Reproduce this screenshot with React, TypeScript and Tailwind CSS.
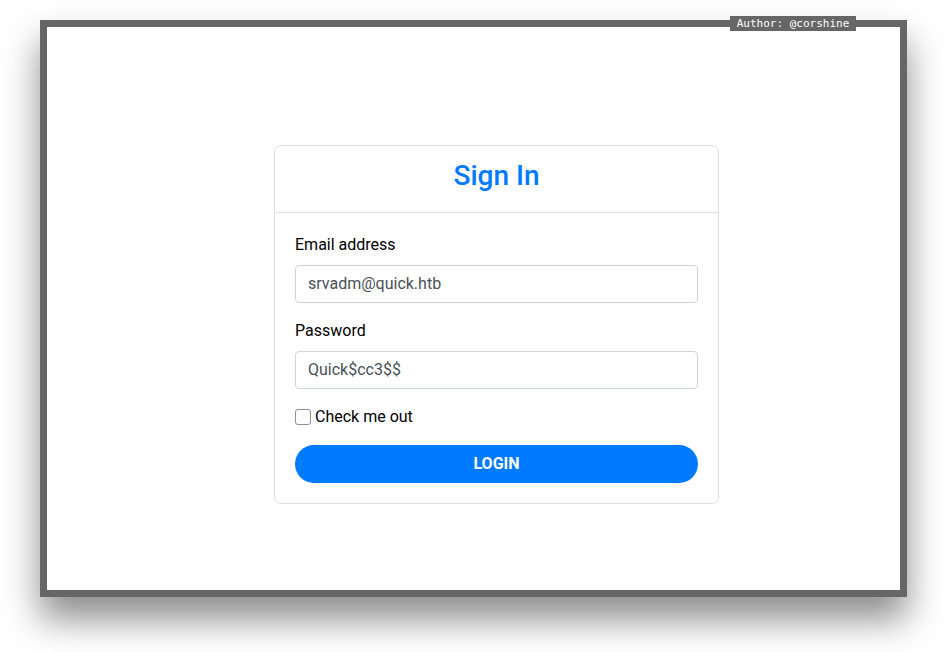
export default function App() {
  return (
    <div className="w-[947px] h-[652px] bg-white overflow-hidden font-['Roboto',sans-serif]">
      <div className="relative ml-[40px] mt-[20px] w-[867px] h-[577px] border-[7px] border-[#666666] bg-white shadow-[0_22px_34px_rgba(0,0,0,0.45)]">
        {/* Author tag */}
        <div className="absolute -top-[11px] left-[683px] h-[15px] w-[126px] bg-[#666666] text-white text-[11px] leading-[15px] text-center font-['DejaVu_Sans_Mono',monospace]">
          Author: @corshine
        </div>

        <div className="pl-[227px] pt-[118px]">
          <div className="w-[445px] rounded-[7px] border border-[#dcdfe3] bg-white">
            <div className="border-b border-[#dcdfe3] pt-[13px] pb-[19px] text-center">
              <h1 className="text-[28px] leading-[1.2] font-medium text-[#007bff]">Sign In</h1>
            </div>
            <form className="p-5" onSubmit={(e) => e.preventDefault()}>
              <label className="block text-base leading-6 text-black mb-2">Email address</label>
              <input
                type="text"
                defaultValue="srvadm@quick.htb"
                className="block w-full h-[38px] px-3 rounded-[4px] border border-[#ced4da] text-base text-[#495057] outline-none"
              />
              <label className="block text-base leading-6 text-black mt-4 mb-2">Password</label>
              <input
                type="text"
                defaultValue="Quick$cc3$$"
                className="block w-full h-[38px] px-3 rounded-[4px] border border-[#ced4da] text-base text-[#495057] outline-none"
              />
              <div className="mt-4 flex items-center h-6">
                <span className="w-[16px] h-[16px] rounded-[3px] border border-[#8f8f8f] bg-white mr-[4px]"></span>
                <span className="text-base leading-6 text-black">Check me out</span>
              </div>
              <button
                type="submit"
                className="mt-4 w-full h-[38px] rounded-full bg-[#007bff] text-white text-base font-bold"
              >
                LOGIN
              </button>
            </form>
          </div>
        </div>
      </div>
    </div>
  );
}
